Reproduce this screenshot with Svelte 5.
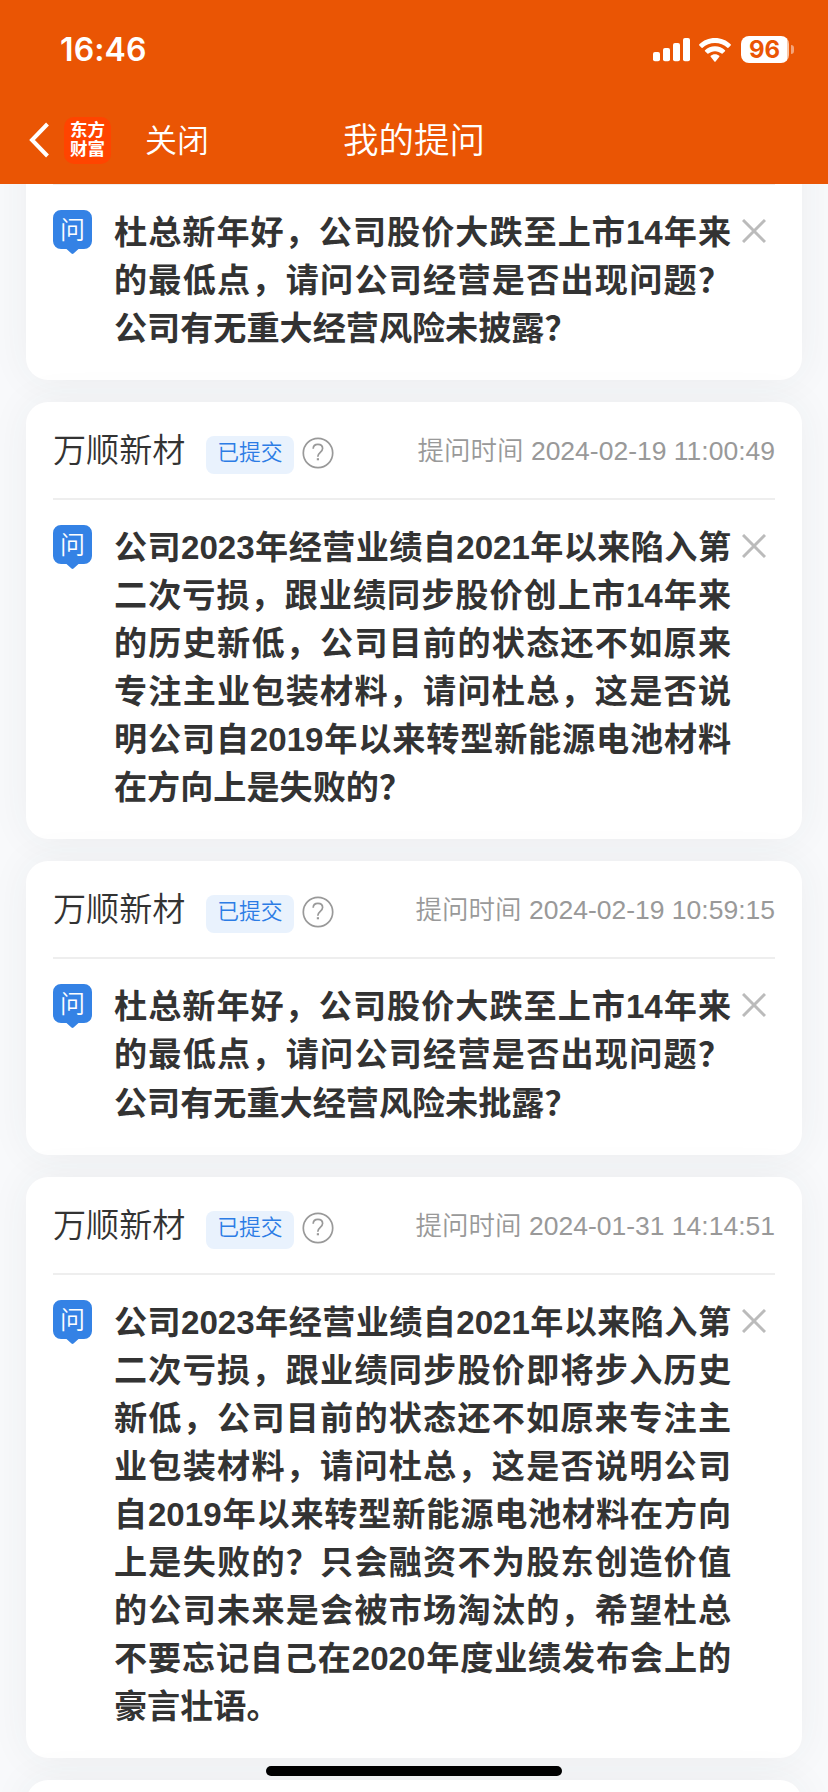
<script>
  const cards = [
    {
      time: '2024-02-19 11:02:18',
      lines: ['杜总新年好，公司股价大跌至上市14年来', '的最低点，请问公司经营是否出现问题？', '公司有无重大经营风险未披露？']
    },
    {
      time: '2024-02-19 11:00:49',
      lines: [
        '公司2023年经营业绩自2021年以来陷入第',
        '二次亏损，跟业绩同步股价创上市14年来',
        '的历史新低，公司目前的状态还不如原来',
        '专注主业包装材料，请问杜总，这是否说',
        '明公司自2019年以来转型新能源电池材料',
        '在方向上是失败的？'
      ]
    },
    {
      time: '2024-02-19 10:59:15',
      lines: ['杜总新年好，公司股价大跌至上市14年来', '的最低点，请问公司经营是否出现问题？', '公司有无重大经营风险未批露？']
    },
    {
      time: '2024-01-31 14:14:51',
      lines: [
        '公司2023年经营业绩自2021年以来陷入第',
        '二次亏损，跟业绩同步股价即将步入历史',
        '新低，公司目前的状态还不如原来专注主',
        '业包装材料，请问杜总，这是否说明公司',
        '自2019年以来转型新能源电池材料在方向',
        '上是失败的？只会融资不为股东创造价值',
        '的公司未来是会被市场淘汰的，希望杜总',
        '不要忘记自己在2020年度业绩发布会上的',
        '豪言壮语。'
      ]
    }
  ];
</script>

<div class="screen">
  <header>
    <div class="status">
      <span class="clock">16:46</span>
      <div class="indicators">
        <svg width="38" height="24" viewBox="0 0 38 24" fill="#fff">
          <rect x="0" y="14" width="7" height="9.3" rx="2" />
          <rect x="10" y="10" width="7" height="13.3" rx="2" />
          <rect x="20" y="5" width="7" height="18.3" rx="2" />
          <rect x="30" y="0" width="7" height="23.3" rx="2" />
        </svg>
        <svg class="wifi" width="32" height="24" viewBox="0 0 32 24" fill="#fff">
          <path d="M16 0C22.2 0 27.8 2.4 31.7 6.3c.3.3.3.8 0 1.1L29.4 9.8c-.3.3-.7.3-1 0C25.200 6.800 20.800 5 16 5S6.800 6.800 3.600 9.800c-.3.3-.7.3-1 0L.3 7.400c-.3-.3-.3-.8 0-1.100C4.200 2.400 9.800 0 16 0Z" />
          <path d="M16 8.300c3.900 0 7.400 1.500 10 3.900.3.3.3.8 0 1.100l-2.400 2.300c-.3.3-.7.3-1 0-1.800-1.500-4.100-2.400-6.600-2.400s-4.800.9-6.600 2.400c-.3.3-.7.3-1 0L6 13.300c-.3-.3-.3-.8 0-1.100 2.600-2.400 6.100-3.900 10-3.900Z" />
          <path d="M16 16.200c1.700 0 3.200.6 4.300 1.500.3.300.3.700 0 1l-3.700 4.800c-.3.4-.9.4-1.200 0l-3.700-4.800c-.3-.3-.3-.7 0-1 1.100-.9 2.600-1.500 4.300-1.500Z" />
        </svg>
        <div class="battery">96</div>
        <i class="tip"></i>
      </div>
    </div>
    <nav>
      <svg class="back" width="22" height="36" viewBox="0 0 22 36" fill="none" stroke="#fff" stroke-width="4">
        <path d="M18.500 2 3 18 18.500 34" />
      </svg>
      <div class="logo"><span>东方</span><span>财富</span></div>
      <span class="close">关闭</span>
      <h1>我的提问</h1>
    </nav>
  </header>

  <main>
    {#each cards as card}
      <article>
        <div class="head">
          <span class="name">万顺新材</span>
          <span class="tag">已提交</span>
          <svg class="help" width="32" height="32" viewBox="0 0 32 32" fill="none" stroke="#999" stroke-width="1.700">
            <circle cx="16" cy="16" r="14.700" />
            <path d="M11.200 11.800c0-2.700 2-4.500 4.700-4.500s4.700 1.700 4.700 4.200c0 3.400-4.700 4.200-4.700 7.700v.5" />
            <path d="M15.900 21.200v2.100" stroke-width="2.200" />
          </svg>
          <span class="time">提问时间 {card.time}</span>
        </div>
        <div class="body">
          <svg class="ask" width="39" height="45" viewBox="0 0 39 45">
            <path fill="#3482e5" d="M8 0h23a8 8 0 0 1 8 8v23a8 8 0 0 1-8 8h-5.500l-5 4.600q-1 .8-2 0l-5-4.600H8a8 8 0 0 1-8-8V8a8 8 0 0 1 8-8Z" />
            <text x="19.500" y="28.500" text-anchor="middle" fill="#fff">问</text>
          </svg>
          <div class="text">
            {#each card.lines as line}
              <p>{line}</p>
            {/each}
          </div>
          <svg class="remove" width="24" height="24" viewBox="0 0 24 24" stroke="#bbb" stroke-width="3">
            <path d="M1 1l22 22M23 1L1 23" />
          </svg>
        </div>
      </article>
    {/each}
    <article class="next"></article>
  </main>
  <div class="home"></div>
</div>

<style>
  :global(body) {
    background: #f8f9fb;
  }
  .screen {
    width: 828px;
    height: 1792px;
    overflow: hidden;
    position: relative;
    background: #f8f9fb;
    font-family: 'Liberation Sans', 'Noto Sans CJK SC', sans-serif;
    color: #333;
    display: flex;
    flex-direction: column;
  }
  header {
    flex: none;
    height: 184px;
    background: #ea5504;
    color: #fff;
    position: relative;
    z-index: 1;
  }
  .status {
    height: 99px;
    display: flex;
    align-items: center;
    justify-content: space-between;
    padding: 0 34px 0 60px;
    box-sizing: border-box;
  }
  .clock {
    font: 600 32px Inter, sans-serif;
    letter-spacing: 0.1px;
  }
  .indicators {
    display: flex;
    align-items: center;
  }
  .wifi {
    margin-left: 8px;
  }
  .battery {
    margin-left: 10px;
    width: 48px;
    height: 27px;
    border-radius: 8px;
    background: linear-gradient(90deg, #fff 46px, #f8c9ab 46px);
    color: #ea5504;
    font: 700 24px/28px Inter, sans-serif;
    text-align: center;
    text-indent: -1px;
  }
  .tip {
    width: 3px;
    height: 9px;
    margin-left: 2px;
    border-radius: 0 4px 4px 0;
    background: #f4a47a;
  }
  nav {
    height: 82px;
    display: grid;
    grid-template-columns: 35px 47px 231px 1fr;
    align-items: center;
    padding-left: 29px;
  }
  .logo {
    width: 47px;
    height: 47px;
    border-radius: 10px;
    background: #ff4400;
    display: flex;
    flex-direction: column;
    align-items: center;
    justify-content: center;
    font-weight: 700;
    font-size: 17.500px;
    line-height: 19.500px;
  }
  .close {
    padding: 1px 0 0 34px;
    font-size: 32px;
    line-height: 40px;
    font-weight: 350;
  }
  h1 {
    margin: 0;
    padding: 1px 0 0 1px;
    font-size: 35.500px;
    line-height: 40px;
    font-weight: 350;
  }
  main {
    padding: 0 26px;
    margin-top: -97px;
    display: flex;
    flex-direction: column;
    gap: 22px;
  }
  article {
    flex: none;
    border-radius: 22px;
    background: #fff;
    box-shadow: 0 0 40px rgba(50, 60, 75, 0.06);
    padding: 0 27px 28px;
    position: relative;
  }
  .next {
    height: 100px;
  }
  .head {
    height: 96px;
    border-bottom: 2px solid #eee;
    display: flex;
    align-items: center;
  }
  .name {
    padding-top: 2px;
    font-size: 33.120px;
    font-weight: 350;
    line-height: 48px;
  }
  .tag {
    margin: 10px 0 0 20.500px;
    width: 88px;
    height: 38px;
    border-radius: 8px;
    background: #e9f2fd;
    color: #2c7ce5;
    font-size: 21.800px;
    font-weight: 350;
    line-height: 33px;
    text-align: center;
  }
  .help {
    margin: 6px 0 0 8.500px;
  }
  .time {
    margin-left: auto;
    padding-bottom: 3px;
    font-size: 26.500px;
    font-weight: 350;
    color: #999;
  }
  .body {
    display: flex;
    align-items: flex-start;
    padding-top: 23px;
  }
  .ask {
    margin-top: 2px;
  }
  .ask text {
    font-size: 25px;
    font-weight: 350;
  }
  .text {
    width: 617px;
    margin-left: 22px;
    font-size: 33.120px;
    font-weight: 700;
  }
  p {
    margin: 0;
    line-height: 50px;
    height: 48.060px;
    white-space: nowrap;
    text-align-last: justify;
  }
  p:last-child {
    text-align-last: left;
  }
  .remove {
    margin: 11px 0 0 11px;
  }
  .home {
    position: absolute;
    left: 266px;
    top: 1766px;
    width: 296px;
    height: 10px;
    border-radius: 5px;
    background: #000;
  }
</style>
